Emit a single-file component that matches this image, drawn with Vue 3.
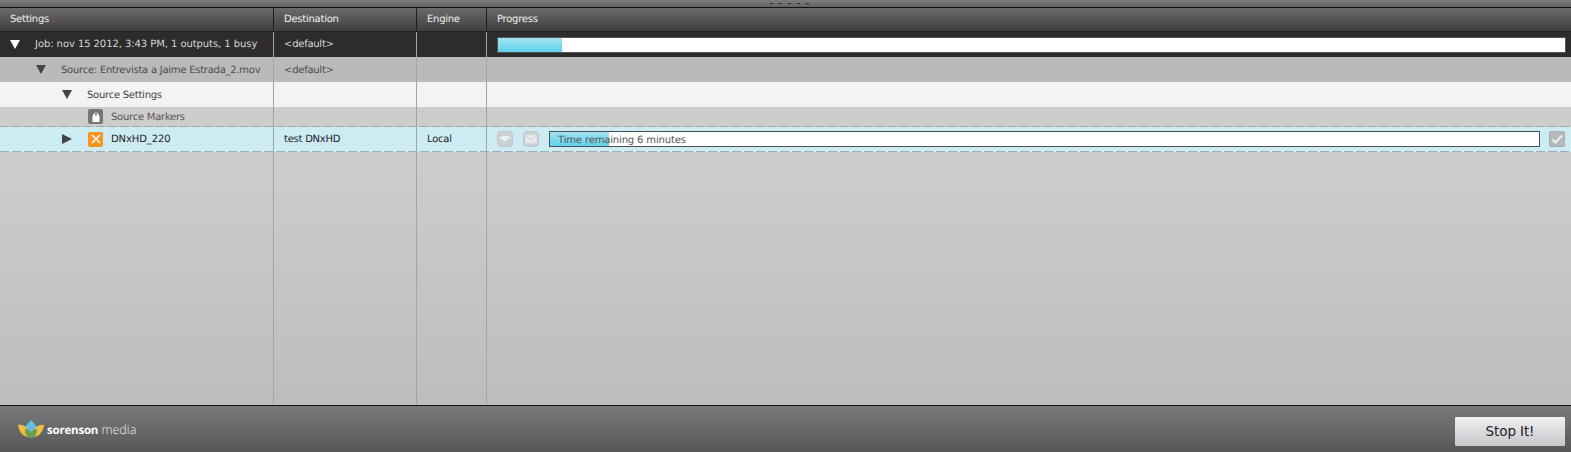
<template>
  <div class="window">
    <div class="grip">
      <span v-for="n in 5" :key="n" class="grip-dot"></span>
    </div>

    <div class="row header">
      <div class="cell">Settings</div>
      <div class="cell">Destination</div>
      <div class="cell">Engine</div>
      <div class="cell">Progress</div>
    </div>

    <div class="row job">
      <div class="cell name">
        <span class="tri down white"></span>
        <span class="label-job">Job: nov 15 2012, 3:43 PM, 1 outputs, 1 busy</span>
      </div>
      <div class="cell">&lt;default&gt;</div>
      <div class="cell"></div>
      <div class="cell">
        <div class="job-bar"><div class="job-fill" :style="{ width: jobProgress + 'px' }"></div></div>
      </div>
    </div>

    <div class="row source">
      <div class="cell name indent-1">
        <span class="tri down"></span>
        <span class="nudge">Source: Entrevista a Jaime Estrada_2.mov</span>
      </div>
      <div class="cell"><span class="nudge">&lt;default&gt;</span></div>
      <div class="cell"></div>
      <div class="cell"></div>
    </div>

    <div class="row settings">
      <div class="cell name indent-2">
        <span class="tri down"></span>
        <span class="nudge">Source Settings</span>
      </div>
      <div class="cell"></div>
      <div class="cell"></div>
      <div class="cell"></div>
    </div>

    <div class="row markers">
      <div class="cell name indent-3">
        <span class="badge grey">
          <svg width="12" height="12" viewBox="0 0 12 12">
            <path d="M2.5 11V6C2.5 4 4 3 5.3 1V5h1.4V1C8 3 9.5 4 9.5 6V11z" fill="#fff" />
          </svg>
        </span>
        <span class="label-markers">Source Markers</span>
      </div>
      <div class="cell"></div>
      <div class="cell"></div>
      <div class="cell"></div>
    </div>

    <div class="row output">
      <div class="cell name indent-2">
        <span class="tri right"></span>
        <span class="badge orange">
          <svg width="12" height="12" viewBox="0 0 12 12">
            <path d="M2 2l8 8M10 2l-8 8" stroke="#fff" stroke-width="1.6" fill="none" />
          </svg>
        </span>
        <span class="label-output">DNxHD_220</span>
      </div>
      <div class="cell">test DNxHD</div>
      <div class="cell">Local</div>
      <div class="cell progress-cell">
        <span class="mini">
          <svg width="12" height="10" viewBox="0 0 12 10">
            <path d="M0 3.5C3 1.5 9 1.5 12 3.5L9.5 5H8.5C8 7.5 4 7.5 3.5 5H2.5z" fill="#eef2f3" />
          </svg>
        </span>
        <span class="mini">
          <svg width="12" height="10" viewBox="0 0 12 10">
            <rect x="0.5" y="1" width="11" height="8" fill="#e8eced" stroke="#dadfe1" />
            <path d="M1 1.5L6 6l5-4.5" fill="none" stroke="#c4cbcd" />
          </svg>
        </span>
        <div class="task-bar">
          <div class="task-fill" :style="{ width: taskProgress + 'px' }"></div>
          <span class="task-text">Time remaining 6 minutes</span>
        </div>
        <span class="mini check">
          <svg width="12" height="10" viewBox="0 0 12 10">
            <path d="M1.5 5.5l3 3L11 1.5" fill="none" stroke="#eceeef" stroke-width="2" />
          </svg>
        </span>
      </div>
    </div>

    <div class="row blank">
      <div class="cell"></div>
      <div class="cell"></div>
      <div class="cell"></div>
      <div class="cell"></div>
    </div>

    <div class="footer">
      <div class="logo">
        <svg width="26" height="18" viewBox="0 0 26 18">
          <path d="M13 0L19.5 7L13 13L6.5 7z" fill="#62bde3" />
          <path d="M0 5C4 4 8 6 10 10L11 17C5 17 1 12 0 5z" fill="#f1bd3f" />
          <path d="M26 5C22 4 18 6 16 10L15 17C21 17 25 12 26 5z" fill="#f1bd3f" />
          <path d="M7 9C10 9 12 10.5 13 13C14 10.5 16 9 19 9C19 14 17 18 13 18C9 18 7 14 7 9z" fill="#6d9f4a" />
        </svg>
        <span class="logo-text"><b>sorenson</b> media</span>
      </div>
      <button class="stop">Stop It!</button>
    </div>
  </div>
</template>

<script setup>
const jobProgress = 64
const taskProgress = 59
</script>

<style>
html,
body {
  margin: 0;
  background: #c8c8c8;
}
</style>

<style scoped>
.window {
  width: 1571px;
  height: 452px;
  display: flex;
  flex-direction: column;
  overflow: hidden;
  font-family: "DejaVu Sans", sans-serif;
  font-size: 10px;
  letter-spacing: -0.25px;
  text-rendering: geometricPrecision;
  color: #333;
}

.grip {
  height: 7px;
  flex: none;
  display: flex;
  justify-content: center;
  align-items: center;
  gap: 6px;
  padding-left: 8px;
  background: linear-gradient(#7c7c7c, #636363);
  border-bottom: 1px solid #111;
}

.grip-dot {
  width: 3px;
  height: 1px;
  background: #2c2c2c;
}

.row {
  display: grid;
  grid-template-columns: 274px 143px 70px 1fr;
  flex: none;
}

.cell {
  display: flex;
  align-items: center;
  padding-left: 10px;
  border-right: 1px solid #a4a4a4;
  min-width: 0;
  white-space: nowrap;
}

.row .cell:last-child {
  border-right: none;
}

.header {
  height: 24px;
  background: linear-gradient(#6b6b6b, #3f3f3f);
  border-bottom: 1px solid #222;
  box-sizing: border-box;
  color: #f0f0f0;
}

.header .cell {
  border-right-color: #1e1e1e;
}

.job {
  height: 25px;
  background: #2c2c2c;
  color: #d8d8d8;
}

.label-job {
  letter-spacing: -0.07px;
}

.source {
  height: 25px;
  background: #bababa;
  color: #4c4c4c;
}

.settings {
  height: 25px;
  background: #f3f3f3;
  color: #444;
}

.nudge {
  margin-top: 1px;
}

.markers {
  height: 19px;
  background: #cdcdcd;
  color: #555;
}

.label-markers {
  margin-top: 2px;
}

/* dashes run over the row edges, 9 on 3 off; top gaps show the grey row above */
.output {
  height: 26px;
  background:
    repeating-linear-gradient(90deg, #9fa5a8 0 9px, #cbcbcb 9px 12px) 0 0 / 100% 1px no-repeat,
    repeating-linear-gradient(90deg, #9fadb3 0 9px, transparent 9px 12px) 0 100% / 100% 1px no-repeat,
    #cdebf3;
  color: #1d1d1d;
}

.label-output {
  letter-spacing: -0.1px;
}

.blank {
  flex: 1;
  flex-basis: 0;
  background: linear-gradient(#cdcdcd, #bdbdbd);
}

.name {
  gap: 15px;
}

.indent-1 {
  padding-left: 36px;
}

.indent-2 {
  padding-left: 62px;
}

.indent-3 {
  padding-left: 88px;
  gap: 8px;
}

.output .name {
  gap: 8px;
}

.tri {
  flex: none;
  width: 0;
  height: 0;
}

.tri.down {
  border-left: 5.5px solid transparent;
  border-right: 5.5px solid transparent;
  border-top: 9px solid #444;
}

.tri.down.white {
  border-top-color: #fff;
}

.tri.right {
  border-top: 5.5px solid transparent;
  border-bottom: 5.5px solid transparent;
  border-left: 10px solid #444;
}

.badge {
  flex: none;
  width: 15px;
  height: 15px;
  border-radius: 2px;
  display: flex;
  align-items: center;
  justify-content: center;
}

.badge.grey {
  background: #767676;
}

.badge.orange {
  background: #f7931e;
  margin-left: 8px;
}

.job-bar {
  width: 1069px;
  height: 16px;
  box-sizing: border-box;
  border: 1px solid #555;
  background: #fff;
}

.job-fill {
  height: 100%;
  background: linear-gradient(#a2e2f2, #5fd2ec);
}

.progress-cell {
  gap: 10px;
}

.mini {
  flex: none;
  width: 16px;
  height: 16px;
  box-sizing: border-box;
  border-radius: 4px;
  background: #c9d1d3;
  border: 1px solid #c0c8ca;
  display: flex;
  align-items: center;
  justify-content: center;
}

.mini.check {
  background: #b4b9bb;
  border-color: #a8adaf;
  border-radius: 2px;
}

.task-bar {
  position: relative;
  width: 991px;
  height: 16px;
  margin-right: -1px;
  box-sizing: border-box;
  border: 1px solid #4a4f52;
  background: #fff;
  display: flex;
  align-items: center;
  flex: none;
  color: #555;
}

.task-fill {
  position: absolute;
  top: 0;
  bottom: 0;
  left: 0;
  background: linear-gradient(#a2e2f2, #5fd2ec);
}

.task-text {
  position: relative;
  padding-left: 8px;
  margin-top: 2px;
  letter-spacing: -0.15px;
}

.footer {
  height: 47px;
  flex: none;
  box-sizing: border-box;
  border-top: 1px solid #111;
  background: linear-gradient(#7a7a7a, #575757);
  display: flex;
  align-items: center;
  justify-content: space-between;
  padding: 0 6px 0 18px;
}

.logo {
  display: flex;
  align-items: center;
  gap: 3px;
}

.logo-text {
  font-family: "Open Sans", sans-serif;
  font-size: 12.5px;
  font-weight: 300;
  color: #f2f2f2;
  letter-spacing: 0;
}

.logo-text b {
  font-size: 11.5px;
  color: #fff;
  font-weight: 700;
  letter-spacing: -0.2px;
}

.stop {
  width: 110px;
  height: 29px;
  margin-top: 4px;
  padding: 0;
  border: none;
  border-radius: 1px;
  background: linear-gradient(#f0f0f3, #c6c7cb);
  font-family: "DejaVu Sans", sans-serif;
  font-size: 13.5px;
  letter-spacing: -0.1px;
  color: #222;
}
</style>
